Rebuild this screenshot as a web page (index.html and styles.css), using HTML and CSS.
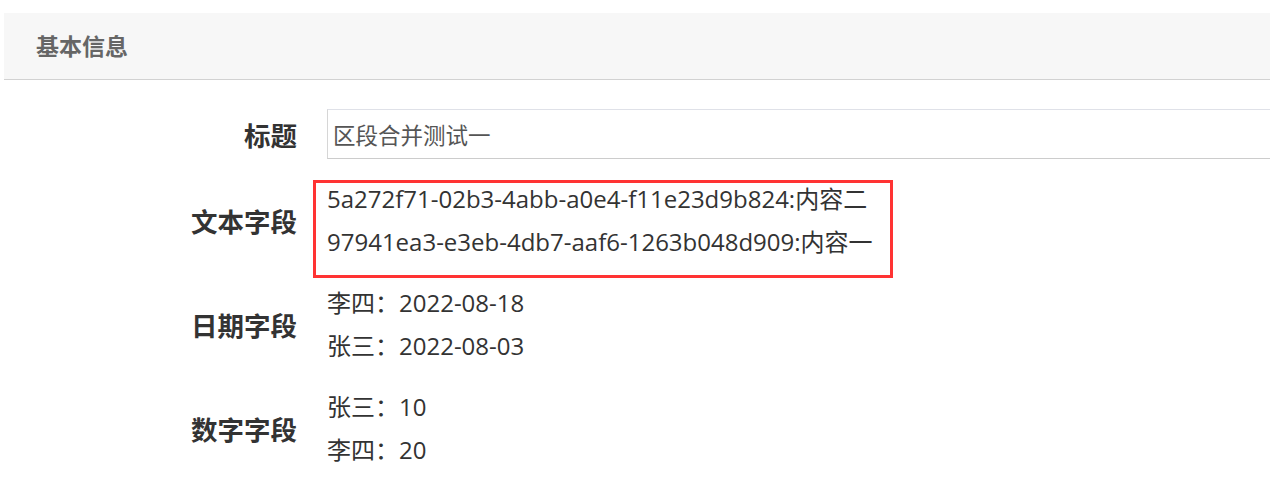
FILE: index.html
```html
<!DOCTYPE html>
<html lang="zh-CN">
<head>
    <meta charset="UTF-8">
    <meta name="viewport" content="width=device-width, initial-scale=1.0">
    <title>基本信息</title>
    <link rel="stylesheet" href="styles.css">
</head>
<body>

    <div class="panel">
        <div class="panel-heading">基本信息</div>

        <!-- form body -->
        <div class="panel-body">
            <div class="form-row">
                <label class="form-label">标题</label>
                <div class="form-value">
                    <input type="text" class="form-input" value="区段合并测试一">
                </div>
            </div>

            <div class="form-row">
                <label class="form-label">文本字段</label>
                <div class="form-value">
                    <div class="highlight">
                        <div class="value-line">5a272f71-02b3-4abb-a0e4-f11e23d9b824:内容二</div>
                        <div class="value-line">97941ea3-e3eb-4db7-aaf6-1263b048d909:内容一</div>
                    </div>
                </div>
            </div>

            <div class="form-row">
                <label class="form-label">日期字段</label>
                <div class="form-value">
                    <div class="value-line">李四：2022-08-18</div>
                    <div class="value-line">张三：2022-08-03</div>
                </div>
            </div>

            <div class="form-row">
                <label class="form-label">数字字段</label>
                <div class="form-value">
                    <div class="value-line">张三：10</div>
                    <div class="value-line">李四：20</div>
                </div>
            </div>
        </div>
    </div>

</body>
</html>
```

FILE: styles.css
```css
html, body {
    margin: 0;
    padding: 0;
    overflow: hidden;
    background-color: #fff;
    font-family: "Open Sans", "Noto Sans CJK SC", sans-serif;
    color: #333;
}
.panel {
    width: 1290px;
    margin: 13px 0 0 4px;
}
.panel-heading {
    height: 66px;
    line-height: 66px;
    padding-left: 32px;
    background-color: #f7f7f7;
    border-bottom: 1px solid #d2d2d2;
    font-size: 23px;
    font-weight: bold;
    color: #666;
}
.panel-body {
    padding-top: 29px;
}
.form-row {
    display: flex;
    align-items: center;
    margin-bottom: 18px;
}
.form-label {
    width: 323px;
    flex-shrink: 0;
    padding-right: 30px;
    box-sizing: border-box;
    text-align: right;
    font-size: 26.5px;
    font-weight: bold;
    color: #333;
}
.form-value {
    flex: 1;
    font-size: 24px;
}
.form-input {
    display: block;
    width: 100%;
    height: 50px;
    box-sizing: border-box;
    margin: 0;
    padding: 0 5px;
    border: 1px solid #d6d6d6;
    border-top-color: #dfe1e8;
    border-bottom-color: #cccccc;
    font-family: inherit;
    font-size: 22.5px;
    color: #555;
    outline: none;
}
.value-line {
    line-height: 43px;
    white-space: nowrap;
}
.highlight {
    position: relative;
    display: inline-block;
}
.highlight::after {
    content: "";
    position: absolute;
    top: 3px;
    left: -14px;
    right: -20px;
    bottom: -15px;
    border: 3px solid #ff3333;
}
```
